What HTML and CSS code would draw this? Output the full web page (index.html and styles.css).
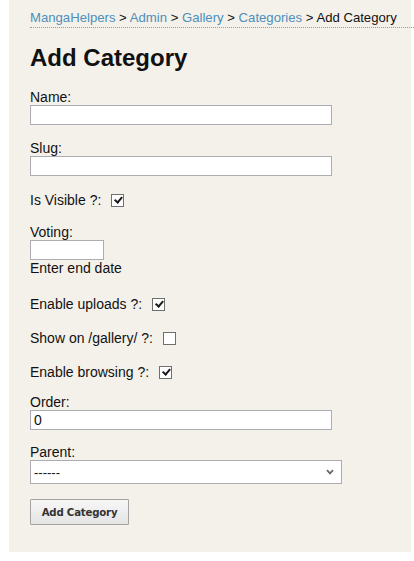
FILE: index.html
```html
<!DOCTYPE html>
<html>
<head>
<meta charset="utf-8">
<link rel="stylesheet" href="styles.css">
</head>
<body>
<div class="page">
  <div class="crumbs"><a href="#">MangaHelpers</a> &gt; <a href="#">Admin</a> &gt; <a href="#">Gallery</a> &gt; <a href="#">Categories</a> &gt; Add Category</div>
  <h1 class="title">Add Category</h1>
  <form class="form">
    <div class="field">
      <label class="lbl">Name:</label>
      <input class="text" type="text">
    </div>
    <div class="field">
      <label class="lbl">Slug:</label>
      <input class="text" type="text">
    </div>
    <div class="check check-first">
      <span>Is Visible ?:</span>
      <input class="box" type="checkbox" checked>
    </div>
    <div class="field field-voting">
      <label class="lbl">Voting:</label>
      <input class="text short" type="text">
      <div class="help">Enter end date</div>
    </div>
    <div class="check">
      <span>Enable uploads ?:</span>
      <input class="box" type="checkbox" checked>
    </div>
    <div class="check">
      <span>Show on /gallery/ ?:</span>
      <input class="box" type="checkbox">
    </div>
    <div class="check check-last">
      <span>Enable browsing ?:</span>
      <input class="box" type="checkbox" checked>
    </div>
    <div class="field field-order">
      <label class="lbl">Order:</label>
      <input class="text" type="text" value="0">
    </div>
    <div class="field">
      <label class="lbl">Parent:</label>
      <div class="select-wrap">
        <select class="select"><option>------</option></select>
        <svg class="chev" width="8" height="6" viewBox="0 0 8 6"><path d="M1 1.2 L4 4.4 L7 1.2" fill="none" stroke="#666" stroke-width="1.7"/></svg>
      </div>
    </div>
    <button class="btn" type="button">Add Category</button>
  </form>
</div>
</body>
</html>
```
FILE: styles.css
```css
body {
  margin: 0;
  background: #fff;
  font-family: "Liberation Sans", Arial, sans-serif;
  font-size: 14px;
  color: #111;
}
.page {
  margin-left: 9px;
  width: 402px;
  box-sizing: border-box;
  padding: 10px 0 27px 21px;
  background: #f4f1eb;
}
.crumbs {
  font-size: 13.15px;
  line-height: 16px;
  padding-bottom: 1px;
  border-bottom: 1px dotted #9a9a9a;
  margin-right: -3px;
  white-space: nowrap;
  color: #111;
}
.crumbs a {
  color: #4d8fbb;
  text-decoration: none;
}
.title {
  font-size: 24px;
  line-height: 28px;
  margin: 16px 0 17px;
  font-weight: bold;
  color: #111;
}
.form {
  margin: 0;
}
.field {
  margin-bottom: 15px;
}
.field-voting {
  margin-bottom: 19px;
}
.field-order {
  margin-bottom: 14px;
}
.lbl {
  display: block;
  line-height: 16px;
}
.text {
  display: block;
  box-sizing: border-box;
  width: 302px;
  height: 20px;
  margin: 0;
  padding: 0 3px;
  border: 1px solid #abadb3;
  border-radius: 0;
  background: #fff;
  font: 14px "Liberation Sans", Arial, sans-serif;
  color: #111;
  outline: none;
}
.short {
  width: 74px;
}
.help {
  line-height: 16px;
}
.check {
  display: flex;
  align-items: center;
  gap: 10px;
  height: 18px;
  margin-bottom: 16px;
}
.check-first {
  margin-bottom: 15px;
}
.check-last {
  margin-bottom: 13px;
}
.box {
  -webkit-appearance: none;
  appearance: none;
  position: relative;
  width: 13px;
  height: 13px;
  margin: 0;
  box-sizing: border-box;
  border: 1px solid #6f6f6f;
  border-radius: 0;
  background: #fff;
  flex: none;
}
.box:checked::after {
  content: "";
  position: absolute;
  left: 3.5px;
  top: 0.5px;
  width: 2.5px;
  height: 6px;
  border: solid #1a1a1a;
  border-width: 0 2px 2px 0;
  transform: rotate(40deg);
}
.select-wrap {
  position: relative;
  width: 312px;
}
.select {
  -webkit-appearance: none;
  appearance: none;
  display: block;
  box-sizing: border-box;
  width: 312px;
  height: 24px;
  margin: 0;
  padding: 0 3px;
  border: 1px solid #abadb3;
  border-radius: 0;
  background: #fff;
  font: 13px "Liberation Sans", Arial, sans-serif;
  color: #111;
}
.chev {
  position: absolute;
  right: 8px;
  top: 9px;
  pointer-events: none;
}
.btn {
  display: block;
  width: 99px;
  height: 26px;
  margin: 0;
  padding: 0;
  border: 1px solid #a3a3a3;
  border-radius: 1px;
  background: linear-gradient(#f7f7f7, #e4e4e4);
  font: bold 10.2px "DejaVu Sans", Verdana, sans-serif;
  letter-spacing: -0.2px;
  color: #333;
}
```
